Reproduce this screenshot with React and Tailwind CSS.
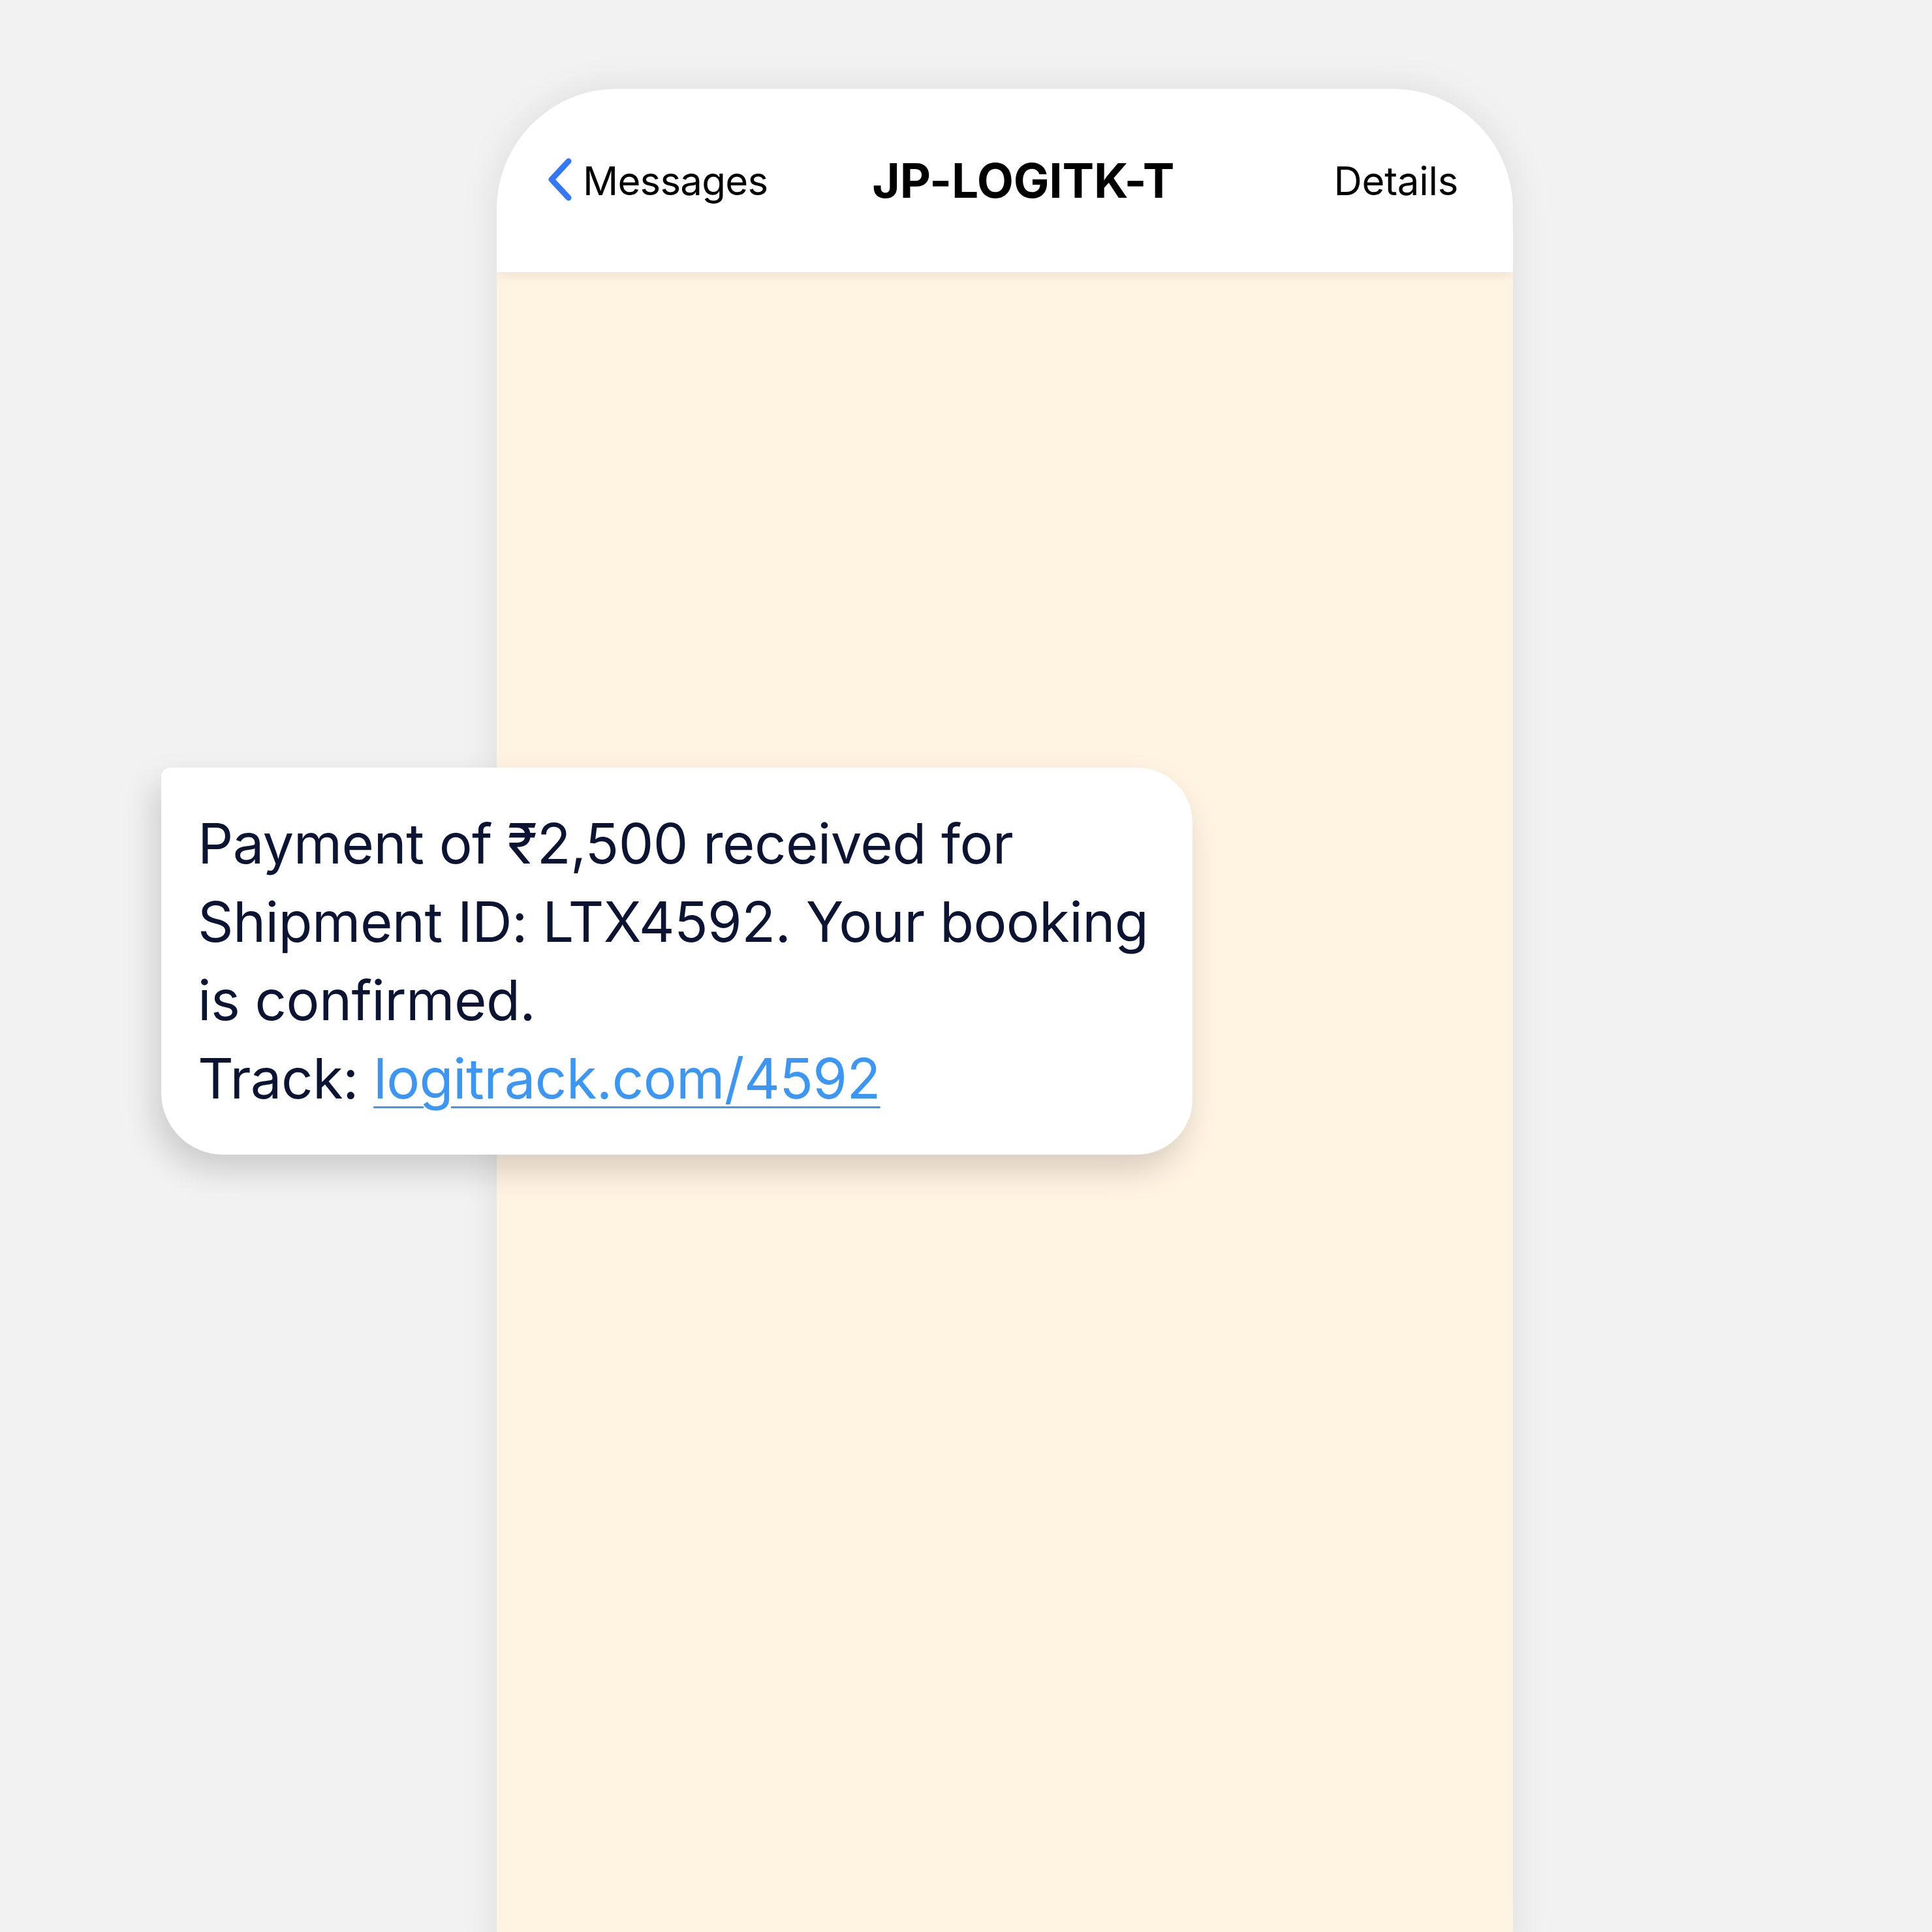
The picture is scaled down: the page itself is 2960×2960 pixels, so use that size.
export default function App() {
  return (
    <div className="relative w-[2960px] h-[2960px] overflow-hidden bg-[#f2f2f2]" style={{ fontFamily: "Inter, 'Noto Sans', sans-serif" }}>
      <div className="pt-[136px] pl-[761px]">
        <div className="w-[1557px] h-[2920px] rounded-t-[185px] rounded-b-[100px] overflow-hidden bg-[#fff3e2] shadow-[0_0_60px_rgba(0,0,0,0.09)] flex flex-col">
          <div className="relative z-10 h-[281px] bg-white flex items-center pl-[77px] pr-[84px] shadow-[0_6px_14px_rgba(120,100,60,0.10)]">
            <div className="flex items-center">
              <svg width="40" height="66" viewBox="0 0 40 66" className="mt-[-4px]">
                <path d="M33 5 L7 33 L33 61" fill="none" stroke="#3478f6" strokeWidth="9" strokeLinecap="round" strokeLinejoin="round" />
              </svg>
              <span className="ml-[15px] text-[60px] leading-none text-black tracking-[-0.8px]">Messages</span>
            </div>
            <span className="ml-[160px] text-[73px] leading-none font-bold text-black tracking-[-0.3px]">JP-LOGITK-T</span>
            <span className="ml-auto text-[60px] leading-none text-black tracking-[-0.3px]">Details</span>
          </div>
          <div className="flex-1" />
        </div>
      </div>
      <div className="absolute left-[247px] top-[1176px] w-[1580px] h-[593px] bg-white rounded-tl-[14px] rounded-tr-[85px] rounded-br-[85px] rounded-bl-[95px] shadow-[-10px_24px_50px_rgba(0,0,0,0.16)] pl-[56px] pt-[57px]">
        <p className="text-[85px] leading-[120px] text-[#0b1433] whitespace-nowrap tracking-[-0.6px]">
          Payment of ₹2,500 received for<br />
          Shipment ID: LTX4592. Your booking<br />
          is confirmed.<br />
          Track: <span className="text-[#3b97f3] underline decoration-[3px] underline-offset-[12px]">logitrack.com/4592</span>
        </p>
      </div>
    </div>
  );
}
